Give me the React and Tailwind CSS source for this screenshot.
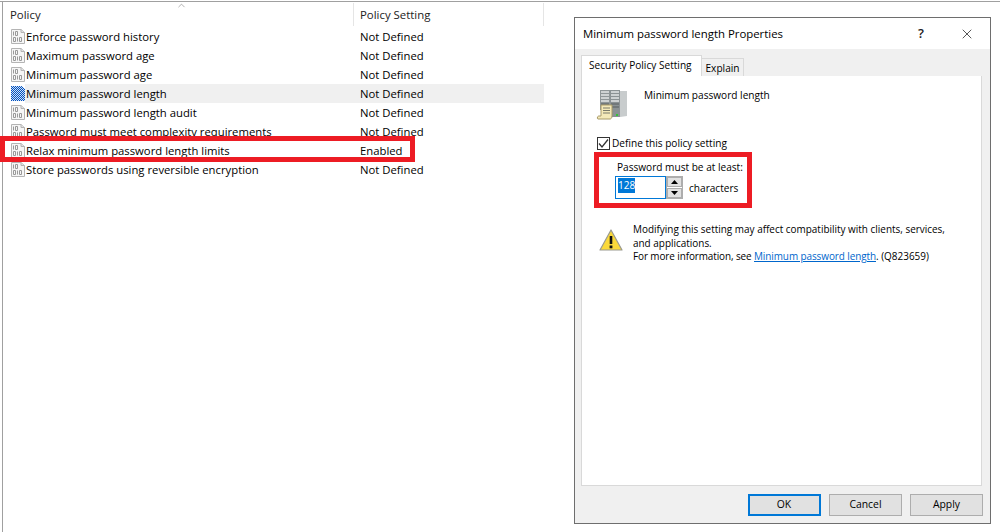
import { X, ChevronUp } from 'lucide-react';

const policies = [
  ['Enforce password history', 'Not Defined'],
  ['Maximum password age', 'Not Defined'],
  ['Minimum password age', 'Not Defined'],
  ['Minimum password length', 'Not Defined', true],
  ['Minimum password length audit', 'Not Defined'],
  ['Password must meet complexity requirements', 'Not Defined'],
  ['Relax minimum password length limits', 'Enabled'],
  ['Store passwords using reversible encryption', 'Not Defined'],
];

const PolicyIcon = ({ selected }) => (
  <svg width="14" height="15" viewBox="0 0 14 15" className="shrink-0">
    <defs>
      <pattern id="dither" width="2" height="2" patternUnits="userSpaceOnUse">
        <rect width="2" height="2" fill="#cfe0f5" />
        <rect width="1" height="1" fill="#0050c0" />
        <rect x="1" y="1" width="1" height="1" fill="#0050c0" />
      </pattern>
    </defs>
    <path d="M.5 .5H10L13.5 3.5V14.5H.5Z" fill="#f6f6f6" stroke="#b4b4b4" />
    <path d="M10 .5V3.5H13.5" fill="#e2e2e2" stroke="#b4b4b4" />
    <path d="M2.5 2.5V6.5M4.5 2.5H6.5V6.5H4.5ZM2.5 8.5H4.5V12.5H2.5ZM6.5 8.5V12.5M8.5 8.5H10.5V12.5H8.5Z" fill="none" stroke="#999999" />
    {selected && <path d="M0 0H10.5L14 3V15H0Z" fill="url(#dither)" />}
  </svg>
);

const ServerIcon = () => (
  <svg width="32" height="32" viewBox="0 0 32 32">
    <path d="M4 2H14V22H4Z" fill="#8f9698" />
    <path d="M24 3L31 3V28L24 29Z" fill="#c8cccd" />
    <path d="M14 2H24V29H14Z" fill="#8b9294" />
    <path d="M5 4H13M5 7H13M5 10H13M5 13H13M15 4H23M15 7H23M15 10H23M15 13H23" stroke="#e4e6e6" strokeWidth="1.5" />
    <path d="M5 16H13M15 16H23M15 19H23" stroke="#6a7072" strokeWidth="1.5" />
    <rect x="20" y="26" width="2" height="2" fill="#35c435" />
    <path d="M5 17H16V28C16 30 15 31 14 31H2C1 31 1 28 3 28H5Z" fill="#f4e9b8" stroke="#a89a68" />
    <path d="M7 20H14M7 22.5H14M7 25H14" stroke="#7a7a6a" />
  </svg>
);

const WarningIcon = () => (
  <svg width="24" height="22" viewBox="0 0 24 22">
    <path d="M12 1L23 21H1Z" fill="#fbd93a" stroke="#9a9a90" strokeWidth="1.2" strokeLinejoin="round" />
    <path d="M12 7V15" stroke="#111111" strokeWidth="2.6" />
    <rect x="10.6" y="16.5" width="2.8" height="2.8" fill="#111111" />
  </svg>
);

const SpinButton = ({ up }) => (
  <div className="h-[10px] w-[15px] flex items-center justify-center bg-[#e1e1e1] border border-[#adadad]">
    <svg width="7" height="4" viewBox="0 0 7 4">
      <path d={up ? 'M3.5 0L7 4H0Z' : 'M0 0H7L3.5 4Z'} fill="#000000" />
    </svg>
  </div>
);

const DialogButton = ({ label, primary }) => (
  <button
    className={`w-[73px] h-[22px] flex items-center justify-center bg-[#e1e1e1] text-[10.4px] text-black ${
      primary ? 'border-2 border-[#0078d7] pr-[1px]' : 'border border-[#adadad]'
    }`}
  >
    {label}
  </button>
);

const PolicyList = () => (
  <div className="w-[572px] ml-[2px] border-l border-[#a0a0a0] shrink-0 pl-[1px]">
    <div className="relative flex h-[25px] items-center text-[11.4px] text-[#222222] w-[540px]">
      <ChevronUp size={11} strokeWidth={1} className="absolute left-[172px] top-[-2px] text-[#555555]" />
      <div className="w-[350px] pl-[6px] h-[23px] leading-[23px] border-r border-[#e5e5e5]">Policy</div>
      <div className="flex-1 pl-[6px] h-[23px] leading-[23px] border-r border-[#e5e5e5]">Policy Setting</div>
    </div>
    <div className="w-[540px]">
      {policies.map(([name, value, selected]) => (
        <div key={name} className="flex h-[19px] items-center text-[11.3px] text-black">
          <div className="w-[21px] flex shrink-0 pl-[7px]">
            <PolicyIcon selected={selected} />
          </div>
          <div className={`flex flex-1 h-[19px] items-center pl-[1px] pt-[2px] ${selected ? 'bg-[#f0f0f0]' : ''}`}>
            <div className="w-[334px] whitespace-nowrap">{name}</div>
            <div className="whitespace-nowrap">{value}</div>
          </div>
        </div>
      ))}
    </div>
  </div>
);

const Dialog = () => (
  <div className="mt-[15px] mb-[8px] w-[417px] border border-[#6e6e6e] bg-[#f0f0f0] flex flex-col">
    <div className="h-[31px] bg-white flex items-center pl-[8px] pr-[15px] text-[11.4px] text-black">
      <span className="flex-1">Minimum password length Properties</span>
      <span className="mr-[35px] text-[13px] font-semibold text-[#222222]">?</span>
      <X size={16} strokeWidth={1} className="text-black" />
    </div>
    <div className="flex flex-col flex-1 pl-[6px] pr-[8px] pt-[6px]">
      <div className="flex h-[21px] items-end text-[10.1px] text-black">
        <div className="w-[121px] h-[21px] bg-white border border-b-0 border-[#d9d9d9] pl-[7px] leading-[18px] whitespace-nowrap">Security Policy Setting</div>
        <div className="w-[42px] h-[18px] bg-[#f0f0f0] border border-l-0 border-b-0 border-[#d9d9d9] text-center leading-[18px]">Explain</div>
      </div>
      <div className="h-[410px] bg-white border border-t-0 border-[#d9d9d9] pl-[14px] text-[10.1px] text-black">
        <div className="flex pt-[12px] h-[52px]">
          <ServerIcon />
          <span className="ml-[16px]">Minimum password length</span>
        </div>
        <div className="flex items-center h-[16px] mt-[7px] gap-[2px] pl-[1px]">
          <div className="w-[13px] h-[13px] border border-[#333333] bg-white flex items-center justify-center">
            <svg width="11" height="11" viewBox="0 0 11 11">
              <path d="M1 5.5L4 9L10 1.5" fill="none" stroke="#333333" strokeWidth="1.3" />
            </svg>
          </div>
          <span className="mt-[1px]">Define this policy setting</span>
        </div>
        <div className="pl-[19px] mt-[8px]">
          <div className="h-[16px] leading-[16px] pl-[2px]">Password must be at least:</div>
          <div className="flex items-center mt-[1px] h-[23px]">
            <div className="w-[51px] h-[23px] border border-[#0078d7] pl-[2px] flex items-center">
              <span className="bg-[#0078d7] text-white h-[15px] leading-[14px] mt-[-4px]">128</span>
            </div>
            <div className="flex flex-col gap-[1px] border border-[#adadad] h-[23px] w-[17px]">
              <SpinButton up />
              <SpinButton />
            </div>
            <span className="ml-[6px] mt-[2px]">characters</span>
          </div>
        </div>
        <div className="flex mt-[24px]">
          <div className="mt-[6px] w-[24px] shrink-0 ml-[3px]"><WarningIcon /></div>
          <p className="ml-[10px] leading-[13.5px] whitespace-nowrap text-[9.95px]">
            Modifying this setting may affect compatibility with clients, services,
            <br />
            and applications.
            <br />
            <span className="tracking-[-0.1px]">For more information, see </span>
            <span className="text-[#0066cc] underline tracking-[-0.08px]">Minimum password length</span>. (Q823659)
          </p>
        </div>
      </div>
      <div className="flex justify-end gap-[8px] mt-[8px] mr-[-1px]">
        <DialogButton label="OK" primary />
        <DialogButton label="Cancel" />
        <DialogButton label="Apply" />
      </div>
    </div>
  </div>
);

export default function App() {
  return (
    <div className="relative w-[1000px] h-[532px] bg-white overflow-hidden pt-[1px] font-['Open_Sans',sans-serif]">
      <div className="flex h-full border-t border-[#a0a0a0]">
        <PolicyList />
        <Dialog />
      </div>
      {/* red annotation boxes */}
      <div className="absolute left-0 top-[136px] w-[415px] h-[26px] border-[5px] border-[#ed1c24]" />
      <div className="absolute left-[594px] top-[152px] w-[158px] h-[56px] border-[5px] border-[#ed1c24]" />
    </div>
  );
}
